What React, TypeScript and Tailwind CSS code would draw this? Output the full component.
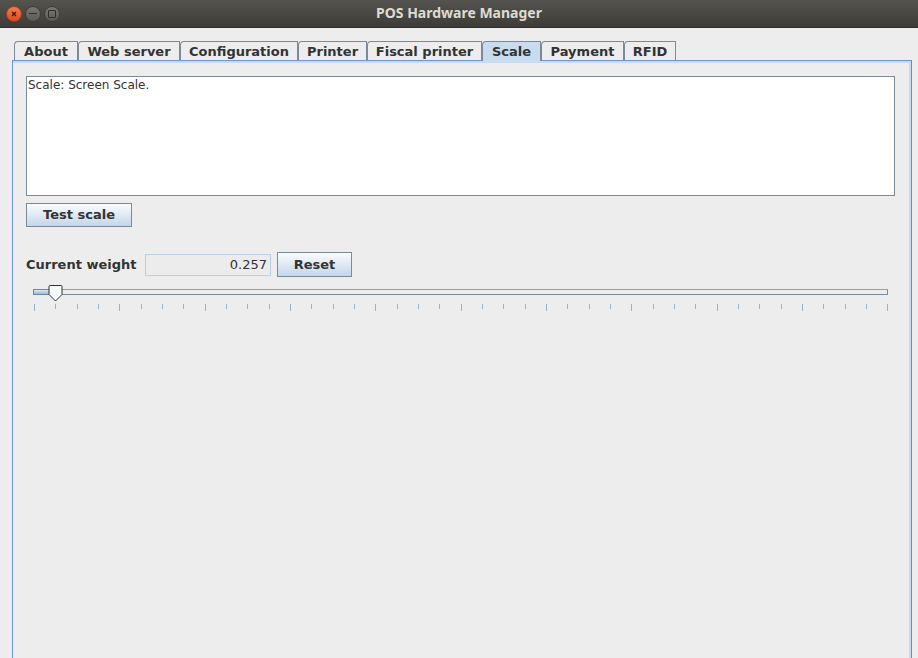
import React from 'react';

const tabs = [
  { label: 'About', w: 64 },
  { label: 'Web server', w: 102 },
  { label: 'Configuration', w: 118 },
  { label: 'Printer', w: 69 },
  { label: 'Fiscal printer', w: 115 },
  { label: 'Scale', w: 59, active: true },
  { label: 'Payment', w: 83 },
  { label: 'RFID', w: 52 },
];

const WindowButtons: React.FC = () => (
  <div className="flex items-center gap-[3px] pl-[6px]">
    <div className="w-[16px] h-[16px] rounded-full bg-gradient-to-b from-[#f37a4f] to-[#e0491b] border border-[#a8401c] flex items-center justify-center">
      <svg width="8" height="8" viewBox="0 0 8 8">
        <path d="M2 2 L6 6 M6 2 L2 6" stroke="#3b1a10" strokeWidth="1.3" />
      </svg>
    </div>
    <div className="w-[16px] h-[16px] rounded-full bg-gradient-to-b from-[#7a7873] to-[#5b5a56] border border-[#3e3d3a] flex items-center justify-center">
      <div className="w-[8px] h-[1.5px] bg-[#2f2e2b]" />
    </div>
    <div className="w-[16px] h-[16px] rounded-full bg-gradient-to-b from-[#7a7873] to-[#5b5a56] border border-[#3e3d3a] flex items-center justify-center">
      <div className="w-[8px] h-[8px] border border-[#2f2e2b] rounded-[1px]" />
    </div>
  </div>
);

const Slider: React.FC = () => {
  const ticks = Array.from({ length: 41 }, (_, i) => i);
  return (
    <div className="relative h-[30px] ml-[7px] w-[855px]">
      <div className="absolute left-0 right-0 top-[8px] h-[6px] border border-[#7a8a99] border-t-[#8da0bf] bg-[#ececec]" />
      <div className="absolute left-0 w-[22px] top-[8px] h-[6px] border border-[#6a86b4] bg-gradient-to-b from-[#dde8f4] to-[#9fb8d8]" />
      <svg className="absolute left-[15px] top-[4px]" width="15" height="17" viewBox="0 0 15 17">
        <path d="M1 1.5 Q1 0.5 2 0.5 H13 Q14 0.5 14 1.5 V9.5 L7.5 16 L1 9.5 Z" fill="#f7fafd" stroke="#333" strokeWidth="1" />
      </svg>
      {ticks.map((i) => (
        <div
          key={i}
          className="absolute top-[23px] w-px bg-[#9cb0c9]"
          style={{ left: Math.round(i * 21.33) + 1, height: i % 4 === 0 ? 7 : 5 }}
        />
      ))}
    </div>
  );
};

const App: React.FC = () => {
  return (
    <div
      className="w-[918px] h-[658px] bg-[#ededed] overflow-hidden flex flex-col text-[#333]"
      style={{ fontFamily: '"DejaVu Sans", Verdana, sans-serif' }}
    >
      <div className="h-[28px] shrink-0 bg-gradient-to-b from-[#55534e] to-[#3d3c38] flex items-center relative border-b border-[#2c2b28]">
        <WindowButtons />
        <div
          className="absolute inset-0 pb-[2px] flex items-center justify-center text-[14px] font-bold text-[#dfdbd2]"
          style={{ fontFamily: '"Noto Sans", "Open Sans", sans-serif' }}
        >
          POS Hardware Manager
        </div>
      </div>

      <div className="flex pl-[14px] mt-[13px] h-[19px] items-end">
        {tabs.map((t) => (
          <div
            key={t.label}
            className={
              t.active
                ? 'h-[20px] -mb-px relative z-10 border border-b-0 border-[#7a8a99] rounded-tl-[4px] bg-[#c8dbef] text-[13px] font-bold flex items-center justify-center leading-none'
                : 'h-[19px] border border-b-0 border-[#7a8a99] rounded-tl-[4px] bg-[#ededed] text-[13px] font-bold flex items-center justify-center leading-none'
            }
            style={{ width: t.w }}
          >
            {t.label}
          </div>
        ))}
      </div>

      <div className="flex-1 ml-[12px] w-[900px] border-l border-t border-[#6f92d8] border-r border-r-[#7a8a99]">
        <div className="h-full border-t-2 border-r-2 border-[#c9dbef] pl-[13px] pt-[13px]">
          <div className="w-[869px] h-[120px] bg-white border border-[#7a8a99] px-px text-[12px] leading-[16px]">
            Scale: Screen Scale.
          </div>

          <button className="mt-[7px] w-[106px] h-[24px] border border-[#7a8a99] bg-gradient-to-b from-[#fbfcfe] to-[#c3d6ea] text-[13px] font-bold flex items-center justify-center">
            Test scale
          </button>

          <div className="mt-[25px] flex items-center h-[25px]">
            <div className="w-[119px] text-[13px] font-bold">Current weight</div>
            <div className="w-[126px] h-[22px] border border-[#b8cfe5] bg-[#ececec] text-[13px] flex items-center justify-end pr-[3px]">
              0.257
            </div>
            <button className="ml-[6px] w-[75px] h-[25px] border border-[#7a8a99] bg-gradient-to-b from-[#fbfcfe] to-[#c3d6ea] text-[13px] font-bold flex items-center justify-center">
              Reset
            </button>
          </div>

          <div className="mt-[4px]">
            <Slider />
          </div>
        </div>
      </div>
    </div>
  );
};

export default App;
